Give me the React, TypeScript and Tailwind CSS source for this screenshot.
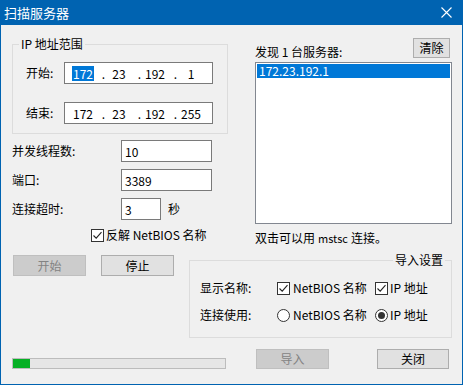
import React from "react";

const btn =
  "flex items-center justify-center border border-[#adadad] bg-[#e1e1e1] text-black text-[12px] leading-none";
const btnDis =
  "flex items-center justify-center border border-[#bfbfbf] bg-[#cccccc] text-[#838383] text-[12px] leading-none";

function Check() {
  return (
    <span className="w-[13px] h-[13px] border border-[#333333] bg-white flex items-center justify-center shrink-0">
      <svg width="11" height="11" viewBox="0 0 11 11">
        <path d="M1.5 5.5 L4.2 8.2 L9.5 2.2" fill="none" stroke="#222" strokeWidth="1.1" />
      </svg>
    </span>
  );
}

function Radio({ on }: { on?: boolean }) {
  return (
    <span className="w-[13px] h-[13px] rounded-full border border-[#333333] bg-white flex items-center justify-center shrink-0">
      {on && <span className="w-[7px] h-[7px] rounded-full bg-[#333333]" />}
    </span>
  );
}

function IpBox({ parts, sel }: { parts: string[]; sel?: boolean }) {
  return (
    <div className="w-[149px] h-[22px] border border-[#7a7a7a] bg-white flex items-center pl-[4px] text-[12px]">
      {parts.map((p, i) => (
        <React.Fragment key={i}>
          <span className="w-[28px] flex justify-center">
            {i === 0 && sel ? (
              <span className="bg-[#0078d7] text-white px-[1px] leading-[15px]">{p}</span>
            ) : (
              <span className="leading-[15px]">{p}</span>
            )}
          </span>
          {i < 3 && <span className="w-[8px] text-right leading-[15px]">.</span>}
        </React.Fragment>
      ))}
    </div>
  );
}

export default function App() {
  return (
    <div
      className="w-[463px] h-[385px] bg-[#0063b1] flex flex-col px-px pb-px text-black"
      style={{ fontFamily: '"Noto Sans CJK SC", "Noto Sans", sans-serif' }}
    >
      {/* title bar */}
      <div className="h-[25px] flex items-center justify-between pl-[3px] pr-[10px] text-white">
        <span className="text-[13px] leading-none">扫描服务器</span>
        <svg width="11" height="11" viewBox="0 0 11 11">
          <path d="M0.5 0.5 L10.5 10.5 M10.5 0.5 L0.5 10.5" stroke="white" strokeWidth="1.1" />
        </svg>
      </div>

      {/* body */}
      <div className="flex-1 bg-[#f0f0f0] flex flex-col text-[12px]">
        {/* top section */}
        <div className="h-[225px] flex items-start">
          {/* left column */}
          <div className="ml-[11px] w-[216px] flex flex-col">
            <div className="relative mt-[19px] w-[216px] h-[90px] border border-[#dcdcdc] pt-[17px] pl-[13px]">
              <span className="absolute -top-[9px] left-[6px] bg-[#f0f0f0] px-[2px] leading-[16px]">
                IP 地址范围
              </span>
              <div className="flex items-center">
                <span className="w-[38px] leading-[16px]">开始:</span>
                <IpBox parts={["172", "23", "192", "1"]} sel />
              </div>
              <div className="flex items-center mt-[18px]">
                <span className="w-[38px] leading-[16px]">结束:</span>
                <IpBox parts={["172", "23", "192", "255"]} />
              </div>
            </div>

            <div className="flex items-center mt-[6px]">
              <span className="w-[109px] leading-[16px]">并发线程数:</span>
              <div className="w-[91px] h-[22px] border border-[#7a7a7a] bg-white flex items-center pl-[3px] leading-[15px]">
                10
              </div>
            </div>
            <div className="flex items-center mt-[7px]">
              <span className="w-[109px] leading-[16px]">端口:</span>
              <div className="w-[91px] h-[22px] border border-[#7a7a7a] bg-white flex items-center pl-[3px] leading-[15px]">
                3389
              </div>
            </div>
            <div className="flex items-center mt-[7px]">
              <span className="w-[109px] leading-[16px]">连接超时:</span>
              <div className="w-[40px] h-[22px] border border-[#7a7a7a] bg-white flex items-center pl-[3px] leading-[15px]">
                3
              </div>
              <span className="ml-[7px] leading-[16px]">秒</span>
            </div>
            <div className="flex items-center mt-[7px] ml-[79px] h-[16px]">
              <Check />
              <span className="ml-[2px] leading-[16px]">反解 NetBIOS 名称</span>
            </div>
          </div>

          {/* right column */}
          <div className="ml-[27px] mt-[13px] w-[197px] flex flex-col">
            <div className="flex items-start justify-between h-[20px]">
              <span className="mt-[6px] leading-[16px]">发现 1 台服务器:</span>
              <div className={`${btn} w-[37px] h-[20px] mr-[2px]`}>清除</div>
            </div>
            <div className="mt-[4px] w-[197px] h-[162px] border border-[#828790] bg-white p-px">
              <div className="h-[14px] bg-[#0078d7] text-white flex items-center pl-[2px] leading-[14px]">
                172.23.192.1
              </div>
            </div>
            <div className="mt-[6px] leading-[16px] flex items-center">
              双击可以用 <span className="text-[11px] mx-[3px]">mstsc</span> 连接。
            </div>
          </div>
        </div>

        {/* middle section */}
        <div className="flex items-start">
          <div className="ml-[12px] mt-[5px] flex gap-[15px]">
            <div className={`${btnDis} w-[73px] h-[21px]`}>开始</div>
            <div className={`${btn} w-[73px] h-[21px]`}>停止</div>
          </div>
          <div className="relative ml-[15px] mt-[10px] w-[263px] h-[78px] border border-[#dcdcdc] pt-[19px] pl-[10px]">
            <span className="absolute -top-[9px] right-[6px] bg-[#f0f0f0] px-[2px] leading-[16px]">
              导入设置
            </span>
            <div className="flex items-center h-[16px]">
              <span className="w-[77px] leading-[16px]">显示名称:</span>
              <div className="w-[98px] flex items-center">
                <Check />
                <span className="ml-[3px] leading-[16px]">NetBIOS 名称</span>
              </div>
              <div className="flex items-center">
                <Check />
                <span className="ml-[2px] leading-[16px]">IP 地址</span>
              </div>
            </div>
            <div className="flex items-center h-[16px] mt-[11px]">
              <span className="w-[77px] leading-[16px]">连接使用:</span>
              <div className="w-[98px] flex items-center">
                <Radio />
                <span className="ml-[3px] leading-[16px]">NetBIOS 名称</span>
              </div>
              <div className="flex items-center">
                <Radio on />
                <span className="ml-[2px] leading-[16px]">IP 地址</span>
              </div>
            </div>
          </div>
        </div>

        {/* footer */}
        <div className="flex items-end mt-[11px]">
          <div className="ml-[11px] w-[214px] h-[11px] border border-[#bcbcbc] bg-[#e6e6e6] flex">
            <div className="w-[17px] h-full bg-[#06b025]" />
          </div>
          <div className={`${btnDis} ml-[30px] w-[73px] h-[20px]`}>导入</div>
          <div className={`${btn} ml-[48px] w-[72px] h-[20px]`}>关闭</div>
        </div>
      </div>
    </div>
  );
}
